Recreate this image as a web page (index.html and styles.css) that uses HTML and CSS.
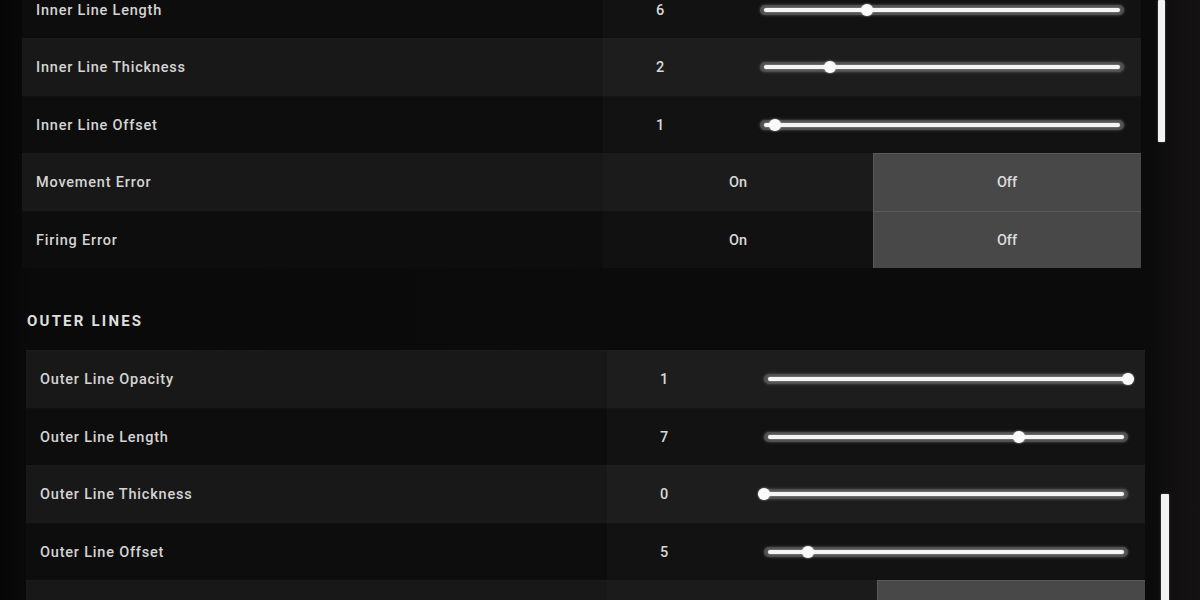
FILE: index.html
```html
<!DOCTYPE html>
<html lang="en">
<head>
<meta charset="utf-8">
<title>Crosshair Settings</title>
<link rel="stylesheet" href="styles.css">
</head>
<body>
<main class="screen">
  <section class="panel panel-top">
    <div class="rows">
      <div class="row dark">
        <div class="label">Inner Line Length</div>
        <div class="value-cell">
          <span class="num">6</span>
          <div class="slider"><span class="track"></span><span class="knob" style="left:29.5%"></span></div>
        </div>
      </div>
      <div class="row light">
        <div class="label">Inner Line Thickness</div>
        <div class="value-cell">
          <span class="num">2</span>
          <div class="slider"><span class="track"></span><span class="knob" style="left:19.3%"></span></div>
        </div>
      </div>
      <div class="row dark">
        <div class="label">Inner Line Offset</div>
        <div class="value-cell">
          <span class="num">1</span>
          <div class="slider"><span class="track"></span><span class="knob" style="left:4.2%"></span></div>
        </div>
      </div>
      <div class="row light">
        <div class="label">Movement Error</div>
        <div class="toggle">
          <div class="opt">On</div>
          <div class="opt active">Off</div>
        </div>
      </div>
      <div class="row dark">
        <div class="label">Firing Error</div>
        <div class="toggle">
          <div class="opt">On</div>
          <div class="opt active">Off</div>
        </div>
      </div>
    </div>
    <div class="scrollbar scrollbar-top"></div>
  </section>

  <h2 class="section-title">OUTER LINES</h2>

  <section class="panel panel-bottom">
    <div class="rows">
      <div class="row light">
        <div class="label">Outer Line Opacity</div>
        <div class="value-cell">
          <span class="num">1</span>
          <div class="slider"><span class="track"></span><span class="knob" style="left:100%"></span></div>
        </div>
      </div>
      <div class="row dark">
        <div class="label">Outer Line Length</div>
        <div class="value-cell">
          <span class="num">7</span>
          <div class="slider"><span class="track"></span><span class="knob" style="left:70%"></span></div>
        </div>
      </div>
      <div class="row light">
        <div class="label">Outer Line Thickness</div>
        <div class="value-cell">
          <span class="num">0</span>
          <div class="slider"><span class="track"></span><span class="knob" style="left:0%"></span></div>
        </div>
      </div>
      <div class="row dark">
        <div class="label">Outer Line Offset</div>
        <div class="value-cell">
          <span class="num">5</span>
          <div class="slider"><span class="track"></span><span class="knob" style="left:12%"></span></div>
        </div>
      </div>
      <div class="row light">
        <div class="label">Movement Error</div>
        <div class="toggle">
          <div class="opt">On</div>
          <div class="opt active">Off</div>
        </div>
      </div>
    </div>
    <div class="scrollbar scrollbar-bottom"></div>
  </section>
</main>
</body>
</html>
```

FILE: styles.css
```css
html, body {
  margin: 0;
  padding: 0;
  height: 600px;
  overflow: hidden;
}

body {
  background: linear-gradient(90deg, #060606 0px, #0b0a0a 30px, #0c0b0b 600px, #0c0b0b 1150px, #121010 1180px, #141212 1200px);
  font-family: Roboto, "Liberation Sans", sans-serif;
  color: #d6d6d6;
}

.screen {
  width: 1200px;
}

.panel {
  display: flex;
  align-items: flex-start;
}

.panel-top {
  margin-top: -19.5px;
  padding-left: 22px;
}

.panel-bottom {
  padding-left: 26px;
}

.rows {
  width: 1119px;
  display: flex;
  flex-direction: column;
}

.row {
  height: 57.5px;
  display: grid;
  grid-template-columns: 581px 1fr;
  align-items: stretch;
  box-shadow: inset 0 1px 0 rgba(255, 255, 255, 0.015);
}

.row.light {
  background: #191818;
}

.row.dark {
  background: #0e0d0d;
}

.label {
  display: flex;
  align-items: center;
  padding-left: 14px;
  padding-top: 2px;
  font-size: 14.5px;
  font-weight: 500;
  letter-spacing: 0.8px;
  color: #d4d4d4;
}

.value-cell {
  display: flex;
  align-items: center;
  padding-top: 1px;
  background: rgba(255, 255, 255, 0.022);
}

.num {
  width: 114px;
  text-align: center;
  padding-top: 1px;
  font-size: 14.5px;
  font-weight: 500;
  color: #d8d8d8;
}

.slider {
  position: relative;
  flex: 1;
  margin-left: 43px;
  margin-right: 17px;
  height: 10px;
  border-radius: 5px;
  background: #4f4f4f;
  box-shadow: 0 0 3px rgba(95, 95, 95, 0.9);
}

.track {
  display: block;
  margin: 3px 4px 0;
  height: 4px;
  border-radius: 2px;
  background: #f4f4f4;
  box-shadow: 0 0 2px rgba(255, 255, 255, 0.6);
}

.knob {
  position: absolute;
  top: 50%;
  width: 12px;
  height: 12px;
  border-radius: 50%;
  background: #fafafa;
  transform: translate(-50%, -50%);
  box-shadow: 0 0 2px rgba(255, 255, 255, 0.7);
}

.toggle {
  display: grid;
  grid-template-columns: 270px 1fr;
}

.opt {
  display: flex;
  align-items: center;
  justify-content: center;
  padding-top: 2px;
  font-size: 14.5px;
  font-weight: 500;
  color: #d8d8d8;
}

.row.light .opt {
  background: #1c1b1b;
}

.row.dark .opt {
  background: #121111;
}

.row .opt.active {
  background: #484848;
  box-shadow: inset 1px 1px 0 #595959;
  color: #dcdcdc;
}

.scrollbar {
  width: 7px;
  background: #f2f2f2;
  border-radius: 1px;
  box-shadow: 0 0 2px rgba(255, 255, 255, 0.4);
}

.scrollbar-top {
  margin-left: 17px;
  margin-top: 19.5px;
  height: 142px;
}

.scrollbar-bottom {
  margin-left: 16px;
  margin-top: 144px;
  width: 8px;
  height: 200px;
}

.section-title {
  margin: 0;
  padding: 43px 0 19px 27px;
  line-height: 20px;
  font-size: 15px;
  font-weight: 700;
  letter-spacing: 2.2px;
  color: #dedede;
}
```
